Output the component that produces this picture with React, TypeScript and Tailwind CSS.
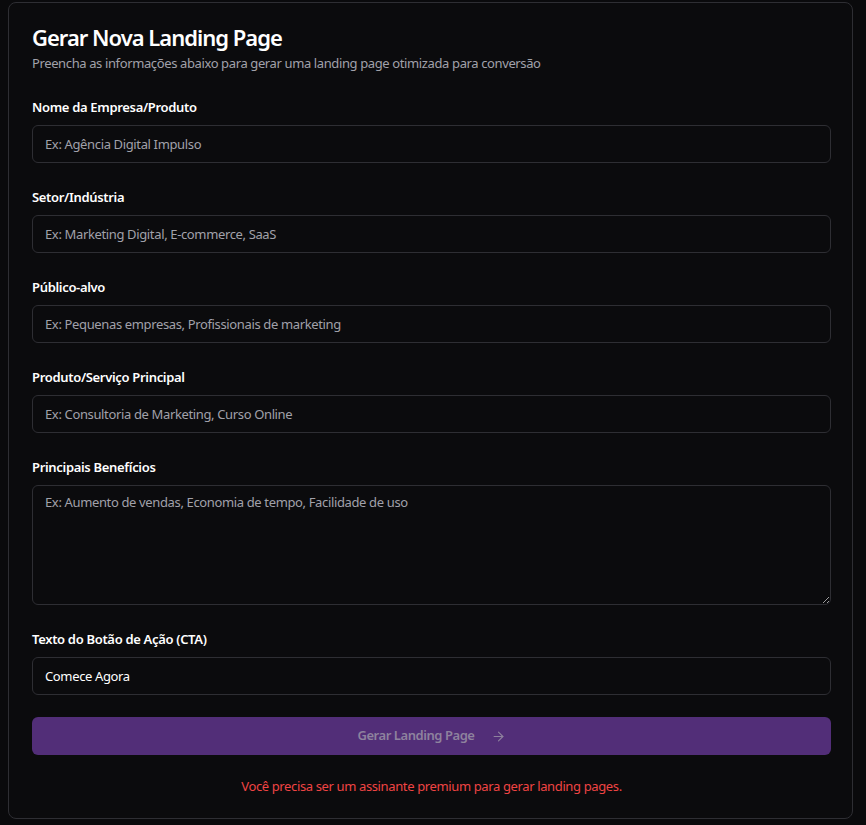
import { ArrowRight } from 'lucide-react'

const fields = [
  { label: 'Nome da Empresa/Produto', placeholder: 'Ex: Agência Digital Impulso' },
  { label: 'Setor/Indústria', placeholder: 'Ex: Marketing Digital, E-commerce, SaaS' },
  { label: 'Público-alvo', placeholder: 'Ex: Pequenas empresas, Profissionais de marketing' },
  { label: 'Produto/Serviço Principal', placeholder: 'Ex: Consultoria de Marketing, Curso Online' },
]

const labelClass = 'text-[13px] font-semibold leading-5 tracking-[-0.32px] text-white'

const inputClass =
  'h-[38px] w-full rounded-md border border-[#2e2e33] bg-[#0b0b0d] px-3 text-[13px] tracking-[-0.36px] text-white placeholder:text-[#a1a1aa] outline-none'

export default function App() {
  return (
    <div
      className="min-h-[825px] bg-[#0a0a0c] pl-2 pt-[2px] pb-[6px]"
      style={{ fontFamily: '"Noto Sans", "Open Sans", sans-serif' }}
    >
      <div className="w-[845px] rounded-lg border border-[#2e2e33] bg-[#0b0b0d] pl-[23px] pr-[21px] pt-[20px] pb-[22px]">
        <h1 className="text-[22px] font-semibold leading-7 tracking-[-1px] text-white">
          Gerar Nova Landing Page
        </h1>
        <p className="mt-[2px] text-[13px] leading-5 tracking-[-0.38px] text-[#a1a1aa]">
          Preencha as informações abaixo para gerar uma landing page otimizada para conversão
        </p>

        <form className="mt-6 flex flex-col gap-6">
          {fields.map((f) => (
            <div key={f.label} className="flex flex-col gap-2">
              <label className={labelClass}>{f.label}</label>
              <input type="text" placeholder={f.placeholder} className={inputClass} />
            </div>
          ))}

          <div className="flex flex-col gap-2">
            <label className={labelClass}>Principais Benefícios</label>
            <textarea
              placeholder="Ex: Aumento de vendas, Economia de tempo, Facilidade de uso"
              className="h-[120px] w-full rounded-md border border-[#2e2e33] bg-[#0b0b0d] px-3 py-[7px] text-[13px] tracking-[-0.36px] text-white placeholder:text-[#a1a1aa] outline-none"
            />
          </div>

          <div className="flex flex-col gap-2">
            <label className={labelClass}>Texto do Botão de Ação (CTA)</label>
            <input type="text" defaultValue="Comece Agora" className={inputClass} />
          </div>
        </form>

        <button
          type="button"
          disabled
          className="mt-[22px] flex h-[38px] w-full items-center justify-center gap-2 rounded-md bg-[#522e78] text-[13px] font-semibold tracking-[-0.44px] text-[#8e829e]"
        >
          Gerar Landing Page
          <ArrowRight size={15} strokeWidth={1.75} className="ml-2" />
        </button>

        <p className="mt-[21px] text-center text-[13px] leading-5 tracking-[-0.37px] text-[#ef4444]">
          Você precisa ser um assinante premium para gerar landing pages.
        </p>
      </div>
    </div>
  )
}
